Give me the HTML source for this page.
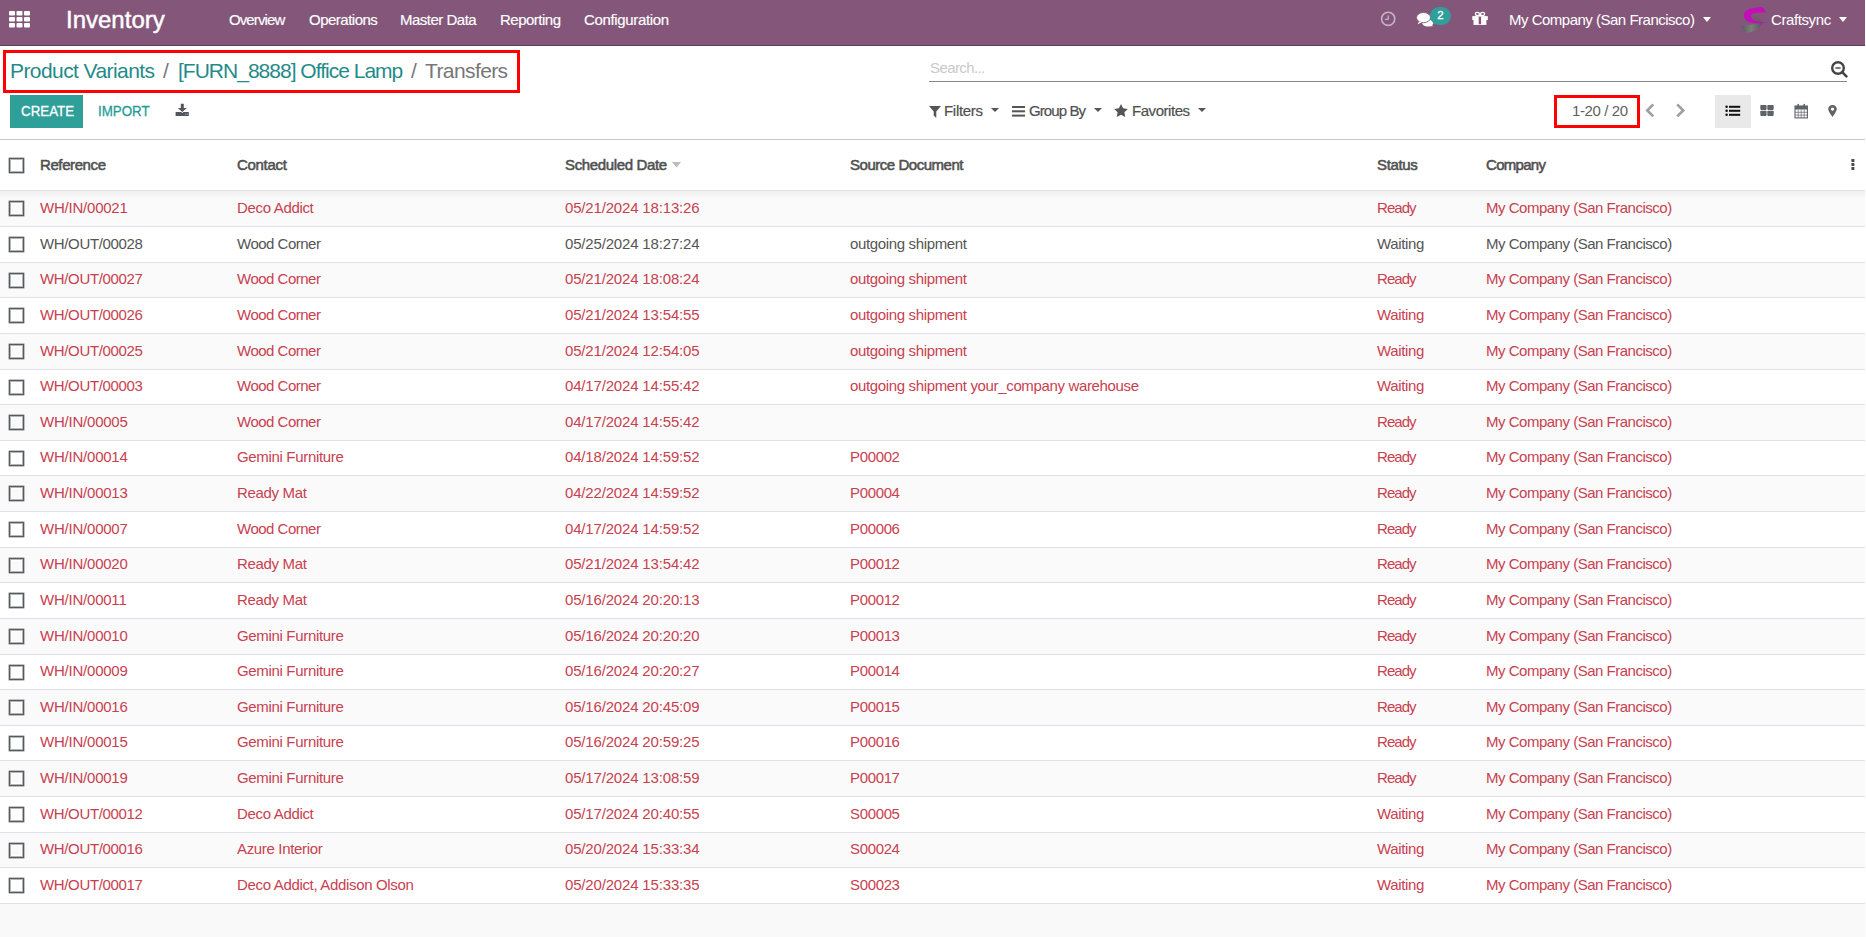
<!DOCTYPE html>
<html><head><meta charset="utf-8">
<style>
*{box-sizing:border-box;margin:0;padding:0}
html,body{width:1866px;height:937px;overflow:hidden}
body{position:relative;background:#fff;font-family:"Liberation Sans",sans-serif;font-size:15px;line-height:20px;color:#4c4c4c}
.abs{position:absolute;white-space:nowrap}
/* navbar */
#nav{position:absolute;left:0;top:0;width:1865px;height:46px;background:#84577a;border-bottom:1px solid #623c59}
#nav .t{position:absolute;white-space:nowrap;color:#fff}
.menu{font-size:15px;letter-spacing:-0.5px;top:10px;-webkit-text-stroke:0.15px #fff}
/* control panel */
#cp{position:absolute;left:0;top:46px;width:1865px;height:94px;background:#fff;border-bottom:1px solid #c8c8c8}
.bc{position:absolute;top:56px;font-size:21px;line-height:30px;white-space:nowrap;color:#1f8b8a;letter-spacing:-0.58px}
.redbox{position:absolute;border:3px solid #f00}
.btn-create{position:absolute;left:10px;top:95px;width:73px;height:33px;background:#2f9f99}
.btn-create span{position:absolute;left:10.5px;top:6px;color:#fff;font-size:15px;-webkit-text-stroke:0.3px #fff;letter-spacing:0px;transform:scaleX(0.89);transform-origin:0 0;white-space:nowrap}
.gray{color:#4f4f4f;-webkit-text-stroke:0.2px #4f4f4f}
/* table */
#thead{position:absolute;left:0;top:140px;width:1865px;height:51px;background:#fff;border-bottom:1px solid #dee2e6}
.th{position:absolute;top:15px;font-weight:normal;color:#505050;-webkit-text-stroke:0.55px #505050;white-space:nowrap}
.row{position:absolute;left:0;width:1865px;background:#fff}
.ln{position:absolute;left:0;width:1865px;height:1px;background:#dee2e6}
.row.odd{background:#fafafb}
.row .c{position:absolute;top:0;white-space:nowrap;letter-spacing:-0.35px;color:#555}
.row.red .c{color:#c8414f}
.row .co{letter-spacing:-0.49px}
.row .ct{letter-spacing:-0.33px}
.row .dt{letter-spacing:-0.17px}
.row .rd{letter-spacing:-0.95px}
.cb{position:absolute;left:9px;top:10px;width:15px;height:15px;border:1px solid #595959;box-shadow:0 0 0 0.4px #6a6a6a,inset 0 0 0 1px #aeb8c2,inset 0 0 0 2px #fff;background:transparent}
#thead .cb{top:18px}
.shadow{position:absolute;left:0;top:191px;width:1865px;height:8px;background:linear-gradient(rgba(0,0,0,0.045),rgba(0,0,0,0))}
</style></head>
<body>
<div style="position:absolute;left:0;top:0;width:1865px;height:937px;background:#f9f9f9"></div>
<div id="nav">
  <svg class="abs" style="left:9px;top:11px" width="22" height="17" viewBox="0 0 22 17">
    <g fill="#fff">
      <rect x="0" y="0" width="6" height="4.5" rx="1"/><rect x="7.5" y="0" width="6" height="4.5" rx="1"/><rect x="15" y="0" width="6" height="4.5" rx="1"/>
      <rect x="0" y="6" width="6" height="4.5" rx="1"/><rect x="7.5" y="6" width="6" height="4.5" rx="1"/><rect x="15" y="6" width="6" height="4.5" rx="1"/>
      <rect x="0" y="12" width="6" height="4.5" rx="1"/><rect x="7.5" y="12" width="6" height="4.5" rx="1"/><rect x="15" y="12" width="6" height="4.5" rx="1"/>
    </g>
  </svg>
  <span class="t" style="left:66px;top:5px;font-size:24px;line-height:30px;letter-spacing:0px;-webkit-text-stroke:0.45px #fff">Inventory</span>
  <span class="t menu" style="left:229px;letter-spacing:-0.9px">Overview</span>
  <span class="t menu" style="left:309px">Operations</span>
  <span class="t menu" style="left:400px">Master Data</span>
  <span class="t menu" style="left:500px">Reporting</span>
  <span class="t menu" style="left:584px;letter-spacing:-0.35px">Configuration</span>
  <!-- clock -->
  <svg class="abs" style="left:1380px;top:11px" width="16" height="16" viewBox="0 0 16 16">
    <circle cx="8.2" cy="7.8" r="6.6" fill="none" stroke="rgba(255,255,255,0.55)" stroke-width="1.6"/>
    <path d="M8.2 4.4V8.4H4.9" fill="none" stroke="rgba(255,255,255,0.55)" stroke-width="1.3"/>
  </svg>
  <!-- comments -->
  <svg class="abs" style="left:1416px;top:11px" width="20" height="17" viewBox="0 0 20 17">
    <ellipse cx="11.8" cy="12" rx="5.6" ry="3.4" fill="#fff"/>
    <path d="M14.5 13.8L17.6 15.3 13.2 15.2z" fill="#fff"/>
    <ellipse cx="7.5" cy="6.6" rx="7" ry="5.1" fill="#fff" stroke="#84577a" stroke-width="0.9"/>
    <path d="M3.2 10.3l-1.6 3 4.4-2.1z" fill="#fff"/>
  </svg>
  <span class="abs" style="left:1430px;top:7px;width:21px;height:18px;border-radius:9px;background:#2f9f99;color:#fff;font-size:11.5px;line-height:17px;text-align:center;-webkit-text-stroke:0.35px #fff">2</span>
  <!-- gift -->
  <svg class="abs" style="left:1472px;top:11px" width="16" height="15" viewBox="0 0 16 15">
    <g fill="#fff">
      <rect x="0.3" y="5.1" width="15.5" height="3.9"/>
      <rect x="1.5" y="8.9" width="12.9" height="5"/>
    </g>
    <rect x="6.7" y="5.6" width="2.4" height="7.6" fill="#84577a"/>
    <ellipse cx="5.4" cy="3" rx="2" ry="1.7" fill="none" stroke="#fff" stroke-width="1.2"/>
    <ellipse cx="10.6" cy="3" rx="2" ry="1.7" fill="none" stroke="#fff" stroke-width="1.2"/>
    <rect x="6.8" y="3.6" width="2.4" height="1.6" fill="#fff"/>
  </svg>
  <span class="t" style="left:1509px;top:10px;letter-spacing:-0.5px">My Company (San Francisco)</span>
  <svg class="abs" style="left:1703px;top:17px" width="8" height="5" viewBox="0 0 8 5"><path d="M0 0h8L4 5z" fill="#fff"/></svg>
  <!-- logo -->
  <svg class="abs" style="left:1736px;top:2px" width="36" height="36" viewBox="0 0 36 36">
    <defs><linearGradient id="gg" x1="0" y1="0" x2="1" y2="0"><stop offset="0" stop-color="#595b5b"/><stop offset="0.45" stop-color="#7b807c"/><stop offset="1" stop-color="#555"/></linearGradient></defs>
    <path d="M5.5 24.5C10 23 18 22.5 27 20 25 25 19 29.5 12.5 30.5 9 31 6.5 27 5.5 24.5z" fill="url(#gg)"/>
    <path d="M16.5 14.5C20 15.5 24 17.5 27 19.5 23 19.5 19 17.5 16.5 14.5z" fill="#5f635f"/>
    <path d="M30 10.6C28.5 7 27 5 25 5L14 6.5C9 8 7.5 12 8 14.5 8.5 18 12 20 17 21 22 22 27 21 30.5 20.5 26 20 20 19.5 16.5 17 14.5 15.5 14.5 12.5 17 11.5 20 10.5 26 10.5 30 10.6z" fill="#c20fb8"/>
  </svg>
  <span class="t" style="left:1771px;top:10px;letter-spacing:-0.4px">Craftsync</span>
  <svg class="abs" style="left:1839px;top:17px" width="8" height="5" viewBox="0 0 8 5"><path d="M0 0h8L4 5z" fill="#fff"/></svg>
</div>

<div id="cp"></div>
<span class="bc" style="left:10px">Product Variants</span>
<span class="bc" style="left:163px;color:#777">/</span>
<span class="bc" style="left:178px;letter-spacing:-0.99px">[FURN_8888] Office Lamp</span>
<span class="bc" style="left:411px;color:#777">/</span>
<span class="bc" style="left:425px;color:#777;letter-spacing:-0.6px">Transfers</span>
<div class="redbox" style="left:3px;top:50px;width:517px;height:43px"></div>

<div class="btn-create"><span>CREATE</span></div>
<span class="abs" style="left:97.5px;top:101px;color:#1f9c96;font-size:15px;-webkit-text-stroke:0.3px #1f9c96;letter-spacing:0px;transform:scaleX(0.89);transform-origin:0 0">IMPORT</span>
<svg class="abs" style="left:175px;top:103px" width="14" height="14" viewBox="0 0 14 14">
  <path d="M5.8 0.8h3v4.3h3L7.3 8.9 2.8 5.1h3z" fill="#50565b"/>
  <path d="M0.6 9.1h5.6l1.1 1 1.1-1h5.4v3.8H0.6z" fill="#50565b"/>
  <rect x="10.2" y="10.7" width="0.9" height="0.9" fill="#ccc"/><rect x="11.8" y="10.7" width="0.9" height="0.9" fill="#ccc"/>
</svg>

<!-- search -->
<span class="abs" style="left:930px;top:58px;color:#c9c9c9;letter-spacing:-0.6px">Search...</span>
<div class="abs" style="left:929px;top:81px;width:918px;height:1px;background:#858585"></div>
<svg class="abs" style="left:1830px;top:60px" width="18" height="18" viewBox="0 0 18 18">
  <circle cx="8" cy="8" r="5.8" fill="none" stroke="#444" stroke-width="2.4"/>
  <path d="M5.3 8h5.4" stroke="#444" stroke-width="1.4"/>
  <path d="M12.2 12.2l4.2 4.2" stroke="#444" stroke-width="2.6" stroke-linecap="round"/>
</svg>

<!-- filters -->
<svg class="abs" style="left:929px;top:105.6px" width="12" height="12" viewBox="0 0 12 12"><path d="M0 0h12L7.3 5.5V12L4.7 9.6V5.5z" fill="#555"/></svg>
<span class="abs gray" style="left:944px;top:101px;letter-spacing:-0.3px">Filters</span>
<svg class="abs" style="left:991px;top:108px" width="8" height="4" viewBox="0 0 8 4"><path d="M0 0h8L4 4z" fill="#555"/></svg>
<svg class="abs" style="left:1012px;top:106px" width="13" height="11" viewBox="0 0 13 11"><g fill="#555"><rect y="0" width="13" height="2"/><rect y="4.3" width="13" height="2"/><rect y="8.6" width="13" height="2"/></g></svg>
<span class="abs gray" style="left:1029px;top:101px;letter-spacing:-0.9px">Group By</span>
<svg class="abs" style="left:1094px;top:108px" width="8" height="4" viewBox="0 0 8 4"><path d="M0 0h8L4 4z" fill="#555"/></svg>
<svg class="abs" style="left:1114px;top:104px" width="14" height="13" viewBox="0 0 14 13"><path d="M7 0l2.1 4.3 4.7.7-3.4 3.3.8 4.7L7 10.8 2.8 13l.8-4.7L.2 5l4.7-.7z" fill="#555"/></svg>
<span class="abs gray" style="left:1132px;top:101px;letter-spacing:-0.45px">Favorites</span>
<svg class="abs" style="left:1198px;top:108px" width="8" height="4" viewBox="0 0 8 4"><path d="M0 0h8L4 4z" fill="#555"/></svg>

<!-- pager -->
<span class="abs" style="left:1572px;top:101px;color:#606060;letter-spacing:-0.4px">1-20 / 20</span>
<div class="redbox" style="left:1554px;top:95px;width:86px;height:33px"></div>
<svg class="abs" style="left:1645px;top:103px" width="11" height="15" viewBox="0 0 11 15"><path d="M8.3 1.4L2.3 7.4l6 6" fill="none" stroke="#9aa0a6" stroke-width="2.7"/></svg>
<svg class="abs" style="left:1675px;top:103px" width="11" height="15" viewBox="0 0 11 15"><path d="M2.2 1.4l6 6-6 6" fill="none" stroke="#9aa0a6" stroke-width="2.7"/></svg>
<!-- view switcher -->
<div class="abs" style="left:1715px;top:95px;width:36px;height:33px;background:#e9e9e9"></div>
<svg class="abs" style="left:1724px;top:104px" width="18" height="14" viewBox="0 0 18 14"><g fill="#111"><circle cx="2.6" cy="2.8" r="1.25"/><circle cx="2.6" cy="6.8" r="1.25"/><circle cx="2.6" cy="10.8" r="1.25"/><rect x="5" y="1.8" width="11.2" height="2"/><rect x="5" y="5.8" width="11.2" height="2"/><rect x="5" y="9.8" width="11.2" height="2"/></g></svg>
<svg class="abs" style="left:1760px;top:104px" width="15" height="13" viewBox="0 0 15 13"><g fill="#5f6368"><rect x="0.3" y="0.9" width="6.3" height="5" rx="0.8"/><rect x="7.3" y="0.9" width="6.4" height="5" rx="0.8"/><rect x="0.3" y="6.7" width="6.3" height="5.2" rx="0.8"/><rect x="7.3" y="6.7" width="6.4" height="5.2" rx="0.8"/></g></svg>
<svg class="abs" style="left:1794px;top:103px" width="15" height="16" viewBox="0 0 15 16"><g fill="none" stroke="#5f6368"><rect x="1" y="3" width="12.4" height="11.9" stroke-width="1.1"/><path d="M4.2 6.5v8.4M7.2 6.5v8.4M10.2 6.5v8.4M1 9.3h12.4M1 12.1h12.4" stroke-width="0.7"/><path d="M4.2 4V1.6M10.2 4V1.6" stroke-width="1.6" stroke-linecap="round"/></g><rect x="1" y="3" width="12.4" height="3.5" fill="#5f6368"/></svg>
<svg class="abs" style="left:1828px;top:105px" width="9" height="12" viewBox="0 0 9 12"><path d="M4.5 0C2 0 .2 1.8 .2 4.1 .2 6.6 4.5 12 4.5 12s4.3-5.4 4.3-7.9C8.8 1.8 7 0 4.5 0zm0 2.4a1.7 1.7 0 110 3.4 1.7 1.7 0 010-3.4z" fill="#5f6368"/></svg>

<!-- table header -->
<div id="thead">
  <i class="cb"></i>
  <span class="th" style="left:40px;letter-spacing:-0.4px">Reference</span>
  <span class="th" style="left:237px;letter-spacing:-0.3px">Contact</span>
  <span class="th" style="left:565px;letter-spacing:-0.35px">Scheduled Date</span>
  <svg class="abs" style="left:672px;top:22px" width="9" height="6" viewBox="0 0 9 6"><path d="M0 0h9L4.5 5.5z" fill="#bbb"/></svg>
  <span class="th" style="left:850px;letter-spacing:-0.47px">Source Document</span>
  <span class="th" style="left:1377px;letter-spacing:-0.35px">Status</span>
  <span class="th" style="left:1486px;letter-spacing:-0.7px">Company</span>
  <svg class="abs" style="left:1851px;top:17px" width="4" height="14" viewBox="0 0 4 14"><g fill="#4a4a4a"><rect x="0.4" y="2" width="3" height="3" rx="0.5"/><rect x="0.4" y="6" width="3" height="3" rx="0.5"/><rect x="0.4" y="10" width="3" height="3" rx="0.5"/></g></svg>
</div>
<div class="row red odd" style="top:191px;height:35px"><i class="cb" style="top:10px"></i><div style="position:absolute;left:0;top:7px"><span class="c" style="left:40px;letter-spacing:-0.22px">WH/IN/00021</span><span class="c ct" style="left:237px">Deco Addict</span><span class="c dt" style="left:565px">05/21/2024 18:13:26</span><span class="c" style="left:850px"></span><span class="c st rd" style="left:1377px">Ready</span><span class="c co" style="left:1486px">My Company (San Francisco)</span></div></div><div class="ln" style="top:226px"></div>
<div class="row" style="top:227px;height:35px"><i class="cb" style="top:10px"></i><div style="position:absolute;left:0;top:7px"><span class="c" style="left:40px">WH/OUT/00028</span><span class="c ct" style="left:237px;letter-spacing:-0.5px">Wood Corner</span><span class="c dt" style="left:565px">05/25/2024 18:27:24</span><span class="c" style="left:850px">outgoing shipment</span><span class="c st" style="left:1377px">Waiting</span><span class="c co" style="left:1486px">My Company (San Francisco)</span></div></div><div class="ln" style="top:262px"></div>
<div class="row red odd" style="top:263px;height:34px"><i class="cb" style="top:10px"></i><div style="position:absolute;left:0;top:6px"><span class="c" style="left:40px">WH/OUT/00027</span><span class="c ct" style="left:237px;letter-spacing:-0.5px">Wood Corner</span><span class="c dt" style="left:565px">05/21/2024 18:08:24</span><span class="c" style="left:850px">outgoing shipment</span><span class="c st rd" style="left:1377px">Ready</span><span class="c co" style="left:1486px">My Company (San Francisco)</span></div></div><div class="ln" style="top:297px"></div>
<div class="row red" style="top:298px;height:35px"><i class="cb" style="top:10px"></i><div style="position:absolute;left:0;top:7px"><span class="c" style="left:40px">WH/OUT/00026</span><span class="c ct" style="left:237px;letter-spacing:-0.5px">Wood Corner</span><span class="c dt" style="left:565px">05/21/2024 13:54:55</span><span class="c" style="left:850px">outgoing shipment</span><span class="c st" style="left:1377px">Waiting</span><span class="c co" style="left:1486px">My Company (San Francisco)</span></div></div><div class="ln" style="top:333px"></div>
<div class="row red odd" style="top:334px;height:35px"><i class="cb" style="top:10px"></i><div style="position:absolute;left:0;top:7px"><span class="c" style="left:40px">WH/OUT/00025</span><span class="c ct" style="left:237px;letter-spacing:-0.5px">Wood Corner</span><span class="c dt" style="left:565px">05/21/2024 12:54:05</span><span class="c" style="left:850px">outgoing shipment</span><span class="c st" style="left:1377px">Waiting</span><span class="c co" style="left:1486px">My Company (San Francisco)</span></div></div><div class="ln" style="top:369px"></div>
<div class="row red" style="top:370px;height:34px"><i class="cb" style="top:10px"></i><div style="position:absolute;left:0;top:6px"><span class="c" style="left:40px">WH/OUT/00003</span><span class="c ct" style="left:237px;letter-spacing:-0.5px">Wood Corner</span><span class="c dt" style="left:565px">04/17/2024 14:55:42</span><span class="c" style="left:850px">outgoing shipment your_company warehouse</span><span class="c st" style="left:1377px">Waiting</span><span class="c co" style="left:1486px">My Company (San Francisco)</span></div></div><div class="ln" style="top:404px"></div>
<div class="row red odd" style="top:405px;height:35px"><i class="cb" style="top:10px"></i><div style="position:absolute;left:0;top:7px"><span class="c" style="left:40px;letter-spacing:-0.22px">WH/IN/00005</span><span class="c ct" style="left:237px;letter-spacing:-0.5px">Wood Corner</span><span class="c dt" style="left:565px">04/17/2024 14:55:42</span><span class="c" style="left:850px"></span><span class="c st rd" style="left:1377px">Ready</span><span class="c co" style="left:1486px">My Company (San Francisco)</span></div></div><div class="ln" style="top:440px"></div>
<div class="row red" style="top:441px;height:34px"><i class="cb" style="top:10px"></i><div style="position:absolute;left:0;top:6px"><span class="c" style="left:40px;letter-spacing:-0.22px">WH/IN/00014</span><span class="c ct" style="left:237px">Gemini Furniture</span><span class="c dt" style="left:565px">04/18/2024 14:59:52</span><span class="c" style="left:850px">P00002</span><span class="c st rd" style="left:1377px">Ready</span><span class="c co" style="left:1486px">My Company (San Francisco)</span></div></div><div class="ln" style="top:475px"></div>
<div class="row red odd" style="top:476px;height:35px"><i class="cb" style="top:10px"></i><div style="position:absolute;left:0;top:7px"><span class="c" style="left:40px;letter-spacing:-0.22px">WH/IN/00013</span><span class="c ct" style="left:237px">Ready Mat</span><span class="c dt" style="left:565px">04/22/2024 14:59:52</span><span class="c" style="left:850px">P00004</span><span class="c st rd" style="left:1377px">Ready</span><span class="c co" style="left:1486px">My Company (San Francisco)</span></div></div><div class="ln" style="top:511px"></div>
<div class="row red" style="top:512px;height:35px"><i class="cb" style="top:10px"></i><div style="position:absolute;left:0;top:7px"><span class="c" style="left:40px;letter-spacing:-0.22px">WH/IN/00007</span><span class="c ct" style="left:237px;letter-spacing:-0.5px">Wood Corner</span><span class="c dt" style="left:565px">04/17/2024 14:59:52</span><span class="c" style="left:850px">P00006</span><span class="c st rd" style="left:1377px">Ready</span><span class="c co" style="left:1486px">My Company (San Francisco)</span></div></div><div class="ln" style="top:547px"></div>
<div class="row red odd" style="top:548px;height:34px"><i class="cb" style="top:10px"></i><div style="position:absolute;left:0;top:6px"><span class="c" style="left:40px;letter-spacing:-0.22px">WH/IN/00020</span><span class="c ct" style="left:237px">Ready Mat</span><span class="c dt" style="left:565px">05/21/2024 13:54:42</span><span class="c" style="left:850px">P00012</span><span class="c st rd" style="left:1377px">Ready</span><span class="c co" style="left:1486px">My Company (San Francisco)</span></div></div><div class="ln" style="top:582px"></div>
<div class="row red" style="top:583px;height:35px"><i class="cb" style="top:10px"></i><div style="position:absolute;left:0;top:7px"><span class="c" style="left:40px;letter-spacing:-0.22px">WH/IN/00011</span><span class="c ct" style="left:237px">Ready Mat</span><span class="c dt" style="left:565px">05/16/2024 20:20:13</span><span class="c" style="left:850px">P00012</span><span class="c st rd" style="left:1377px">Ready</span><span class="c co" style="left:1486px">My Company (San Francisco)</span></div></div><div class="ln" style="top:618px"></div>
<div class="row red odd" style="top:619px;height:35px"><i class="cb" style="top:10px"></i><div style="position:absolute;left:0;top:7px"><span class="c" style="left:40px;letter-spacing:-0.22px">WH/IN/00010</span><span class="c ct" style="left:237px">Gemini Furniture</span><span class="c dt" style="left:565px">05/16/2024 20:20:20</span><span class="c" style="left:850px">P00013</span><span class="c st rd" style="left:1377px">Ready</span><span class="c co" style="left:1486px">My Company (San Francisco)</span></div></div><div class="ln" style="top:654px"></div>
<div class="row red" style="top:655px;height:34px"><i class="cb" style="top:10px"></i><div style="position:absolute;left:0;top:6px"><span class="c" style="left:40px;letter-spacing:-0.22px">WH/IN/00009</span><span class="c ct" style="left:237px">Gemini Furniture</span><span class="c dt" style="left:565px">05/16/2024 20:20:27</span><span class="c" style="left:850px">P00014</span><span class="c st rd" style="left:1377px">Ready</span><span class="c co" style="left:1486px">My Company (San Francisco)</span></div></div><div class="ln" style="top:689px"></div>
<div class="row red odd" style="top:690px;height:35px"><i class="cb" style="top:10px"></i><div style="position:absolute;left:0;top:7px"><span class="c" style="left:40px;letter-spacing:-0.22px">WH/IN/00016</span><span class="c ct" style="left:237px">Gemini Furniture</span><span class="c dt" style="left:565px">05/16/2024 20:45:09</span><span class="c" style="left:850px">P00015</span><span class="c st rd" style="left:1377px">Ready</span><span class="c co" style="left:1486px">My Company (San Francisco)</span></div></div><div class="ln" style="top:725px"></div>
<div class="row red" style="top:726px;height:34px"><i class="cb" style="top:10px"></i><div style="position:absolute;left:0;top:6px"><span class="c" style="left:40px;letter-spacing:-0.22px">WH/IN/00015</span><span class="c ct" style="left:237px">Gemini Furniture</span><span class="c dt" style="left:565px">05/16/2024 20:59:25</span><span class="c" style="left:850px">P00016</span><span class="c st rd" style="left:1377px">Ready</span><span class="c co" style="left:1486px">My Company (San Francisco)</span></div></div><div class="ln" style="top:760px"></div>
<div class="row red odd" style="top:761px;height:35px"><i class="cb" style="top:10px"></i><div style="position:absolute;left:0;top:7px"><span class="c" style="left:40px;letter-spacing:-0.22px">WH/IN/00019</span><span class="c ct" style="left:237px">Gemini Furniture</span><span class="c dt" style="left:565px">05/17/2024 13:08:59</span><span class="c" style="left:850px">P00017</span><span class="c st rd" style="left:1377px">Ready</span><span class="c co" style="left:1486px">My Company (San Francisco)</span></div></div><div class="ln" style="top:796px"></div>
<div class="row red" style="top:797px;height:35px"><i class="cb" style="top:10px"></i><div style="position:absolute;left:0;top:7px"><span class="c" style="left:40px">WH/OUT/00012</span><span class="c ct" style="left:237px">Deco Addict</span><span class="c dt" style="left:565px">05/17/2024 20:40:55</span><span class="c" style="left:850px">S00005</span><span class="c st" style="left:1377px">Waiting</span><span class="c co" style="left:1486px">My Company (San Francisco)</span></div></div><div class="ln" style="top:832px"></div>
<div class="row red odd" style="top:833px;height:34px"><i class="cb" style="top:10px"></i><div style="position:absolute;left:0;top:6px"><span class="c" style="left:40px">WH/OUT/00016</span><span class="c ct" style="left:237px">Azure Interior</span><span class="c dt" style="left:565px">05/20/2024 15:33:34</span><span class="c" style="left:850px">S00024</span><span class="c st" style="left:1377px">Waiting</span><span class="c co" style="left:1486px">My Company (San Francisco)</span></div></div><div class="ln" style="top:867px"></div>
<div class="row red" style="top:868px;height:35px"><i class="cb" style="top:10px"></i><div style="position:absolute;left:0;top:7px"><span class="c" style="left:40px">WH/OUT/00017</span><span class="c ct" style="left:237px">Deco Addict, Addison Olson</span><span class="c dt" style="left:565px">05/20/2024 15:33:35</span><span class="c" style="left:850px">S00023</span><span class="c st" style="left:1377px">Waiting</span><span class="c co" style="left:1486px">My Company (San Francisco)</span></div></div><div class="ln" style="top:903px"></div>
<div class="shadow"></div>
</body></html>
